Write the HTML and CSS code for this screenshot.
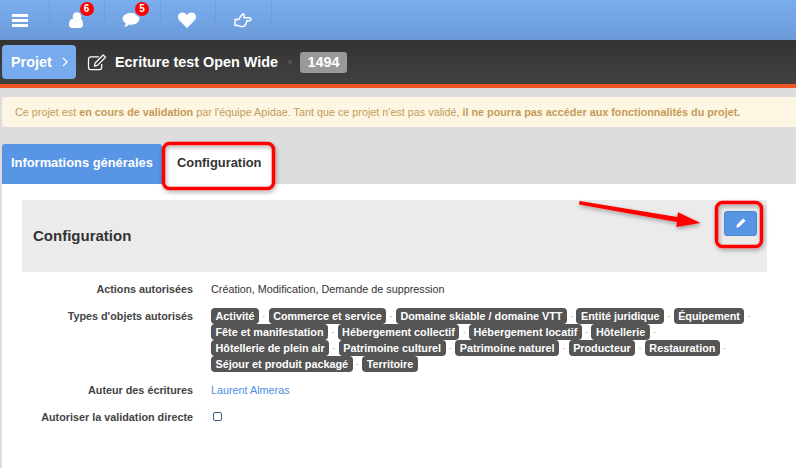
FILE: index.html
```html
<!DOCTYPE html>
<html lang="fr">
<head>
<meta charset="utf-8">
<title>Configuration</title>
<link rel="stylesheet" href="styles.css">
</head>
<body>
<nav class="topbar">
  <div class="cell first">
    <svg class="ico" width="16" height="13" viewBox="0 0 16 13"><path fill="#fff" d="M0 0h16v3H0zM0 5h16v3H0zM0 10h16v3H0z"/></svg>
  </div>
  <div class="cell">
    <svg class="ico" width="14" height="16" viewBox="0 0 14 16"><circle cx="8" cy="4.500" r="4.300" fill="#fff"/><path fill="#fff" d="M0 12.500C0 9 1.500 7 3.500 6.500 5 8 6 8.500 7.500 8.500s3-.5 4-2c1.500.5 2.500 2.500 2.500 6 0 2-1 3.500-3 3.500H3c-2 0-3-1.500-3-3.500z"/></svg>
    <span class="count">6</span>
  </div>
  <div class="cell">
    <svg class="ico" width="18" height="16" viewBox="0 0 18 17"><path fill="#fff" d="M9 1c5 0 9 2.700 9 6.300S14 13.500 9 13.500c-.8 0-1.500 0-2.200-.2C5.500 14.800 3.500 16 1.500 16c1-1 1.800-2.200 2-3.800C1.400 11.100 0 9.300 0 7.300 0 3.700 4 1 9 1z"/></svg>
    <span class="count">5</span>
  </div>
  <div class="cell">
    <svg class="ico" width="18" height="16" viewBox="0 0 18 16"><path fill="#fff" d="M9 16 1.500 8.500C-.5 6.500-.5 3.500 1.200 1.700 3 0 6 0 7.800 1.700L9 3l1.200-1.300C12 0 15 0 16.800 1.700c1.700 1.800 1.700 4.800-.3 6.800z"/></svg>
  </div>
  <div class="cell">
    <svg class="ico" width="18" height="15" viewBox="0 0 18 15"><path fill="none" stroke="#fff" stroke-width="1.500" stroke-linejoin="round" d="M1 6.500h3.500L8.500 1c1.200 0 2 .8 1.800 2L9.800 4.800h5.400c1 0 1.800.7 1.800 1.500s-.8 1.500-1.800 1.500h-2.500c.5.900 0 1.800-.7 2 .3.900-.2 1.700-1 1.900.1 1-.6 1.800-1.700 1.800H6.500c-1 0-1.500-.6-2-1H1z"/></svg>
  </div>
</nav>

<header class="projectbar">
  <a class="crumb">Projet <svg class="chev" width="6" height="10" viewBox="0 0 6 10"><path fill="none" stroke="#fff" stroke-width="1.300" d="M1 1l4 4-4 4"/></svg></a>
  <svg class="edit" width="20" height="17" viewBox="0 0 20 18"><path fill="none" stroke="#fff" stroke-width="1.300" d="M15 10.500V14a2.500 2.500 0 0 1-2.500 2.500h-9A2.500 2.500 0 0 1 1 14V5.500A2.500 2.500 0 0 1 3.500 3H12"/><path fill="none" stroke="#fff" stroke-width="1.300" stroke-linejoin="round" d="M16.500 1l2.500 2.500-8.500 8.500-3.300.8.800-3.300z"/></svg>
  <h1 class="title">Ecriture test Open Wide</h1>
  <span class="sep"></span>
  <span class="idbadge">1494</span>
</header>
<div class="stripe"></div>

<main class="page">
  <p class="alert">Ce projet est <b>en cours de validation</b> par l'équipe Apidae. Tant que ce projet n'est pas validé, <b>il ne pourra pas accéder aux fonctionnalités du projet.</b></p>

  <div class="tabs">
    <a class="tab active">Informations générales</a>
    <a class="tab">Configuration</a>
  </div>

  <section class="content">
    <div class="panelhead">
      <h2>Configuration</h2>
      <button class="editbtn" type="button"><svg width="10" height="10" viewBox="0 0 10 10"><path fill="#fff" d="M7.200.5l2.300 2.300-6.300 6.300L.3 9.700l.6-2.900z"/></svg></button>
    </div>
    <div class="row">
      <div class="label">Actions autorisées</div>
      <div class="value">Création, Modification, Demande de suppression</div>
    </div>
    <div class="row">
      <div class="label">Types d'objets autorisés</div>
      <div class="value tags">
        <span class="tag">Activité</span> <i>·</i> <span class="tag">Commerce et service</span> <i>·</i> <span class="tag">Domaine skiable / domaine VTT</span> <i>·</i> <span class="tag">Entité juridique</span> <i>·</i> <span class="tag">Équipement</span> <i>·</i>
        <span class="tag">Fête et manifestation</span> <i>·</i> <span class="tag">Hébergement collectif</span> <i>·</i> <span class="tag">Hébergement locatif</span> <i>·</i> <span class="tag">Hôtellerie</span> <i>·</i>
        <span class="tag">Hôtellerie de plein air</span> <i>·</i> <span class="tag">Patrimoine culturel</span> <i>·</i> <span class="tag">Patrimoine naturel</span> <i>·</i> <span class="tag">Producteur</span> <i>·</i> <span class="tag">Restauration</span> <i>·</i>
        <span class="tag">Séjour et produit packagé</span> <i>·</i> <span class="tag">Territoire</span>
      </div>
    </div>
    <div class="row">
      <div class="label">Auteur des écritures</div>
      <div class="value"><a class="link">Laurent Almeras</a></div>
    </div>
    <div class="row">
      <div class="label">Autoriser la validation directe</div>
      <div class="value"><span class="check"></span></div>
    </div>
  </section>
</main>

<svg class="annot" width="796" height="468" viewBox="0 0 796 468">
  <defs>
    <filter id="sh" x="-20%" y="-20%" width="140%" height="140%"><feDropShadow dx="1" dy="2" stdDeviation="2" flood-color="#000" flood-opacity=".35"/></filter>
  </defs>
  <g filter="url(#sh)">
    <rect x="163.500" y="143.500" width="110" height="45" rx="6" fill="none" stroke="#f00" stroke-width="3.500"/>
    <rect x="716.500" y="202.500" width="45" height="44" rx="6" fill="none" stroke="#f00" stroke-width="3.500"/>
    <path fill="#f00" d="M579.500 201l-.5 3.500 98 17.500-.8 5 24.300-4-22.500-10.800-.7 4.800z"/>
  </g>
</svg>
</body>
</html>
```
FILE: styles.css
```css
* { box-sizing: border-box; }
html, body { margin: 0; padding: 0; }
body {
  width: 796px;
  height: 468px;
  overflow: hidden;
  position: relative;
  background: #ddd;
  font-family: "Liberation Sans", Arial, sans-serif;
  font-size: 10.8px;
  color: #333;
}
.topbar {
  display: flex;
  height: 40px;
  background: linear-gradient(#7baeee, #6a9ad8);
}
.cell {
  position: relative;
  width: 55.6px;
  height: 40px;
  padding-right: 2px;
  display: flex;
  align-items: center;
  justify-content: center;
  border-right: 1px solid #6f9fe0;
}
.cell.first { width: 49.5px; padding-right: 8px; }
.ico { display: block; }
.count {
  position: absolute;
  top: 2px;
  left: 30px;
  width: 14px;
  height: 14px;
  border-radius: 50%;
  background: #f00;
  box-shadow: 0 0 0 1.5px #78aae9;
  color: #fff;
  font-size: 10px;
  font-weight: bold;
  line-height: 14px;
  text-align: center;
}
.projectbar {
  display: flex;
  align-items: center;
  height: 44px;
  padding-left: 2px;
  background: linear-gradient(#333, #414141);
  color: #fff;
}
.crumb {
  display: flex;
  align-items: center;
  width: 74px;
  height: 34px;
  padding-left: 9px;
  border-radius: 4px;
  background: #78aaee;
  font-size: 14.4px;
  font-weight: bold;
}
.chev { margin-left: 10px; }
.edit { margin-left: 11px; }
.title {
  margin: 0 0 0 8px;
  font-size: 14.4px;
  font-weight: bold;
}
.sep {
  width: 4px;
  height: 4px;
  margin-left: 10px;
  border-radius: 50%;
  background: #555;
}
.idbadge {
  margin-left: 8px;
  width: 47px;
  height: 21px;
  border-radius: 3px;
  background: #999;
  font-size: 14.4px;
  font-weight: bold;
  line-height: 21px;
  text-align: center;
}
.stripe { height: 4px; background: #ee5626; }
.page { padding: 9px 0 0 2px; }
.alert {
  margin: 0 0 17px 0;
  height: 30px;
  padding-left: 13px;
  background: #fdf6e3;
  border-radius: 3px 0 0 3px;
  color: #c59a57;
  line-height: 30px;
}
.alert b { font-weight: bold; }
.tabs { display: flex; height: 40px; }
.tab {
  display: block;
  height: 40px;
  line-height: 38px;
  font-size: 12.9px;
  font-weight: bold;
  white-space: nowrap;
  border-radius: 3px 3px 0 0;
}
.tab.active {
  width: 160px;
  padding-left: 9px;
  background: #5895e4;
  color: #fff;
}
.tab:not(.active) {
  width: 111px;
  padding-left: 15px;
  background: #fff;
  color: #333;
}
.content {
  height: 300px;
  padding: 16px 29px 0 20px;
  background: #fff;
}
.panelhead {
  display: flex;
  align-items: center;
  justify-content: space-between;
  height: 72px;
  padding: 0 10px 2px 11px;
  margin-bottom: 9px;
  background: #ebebeb;
}
.panelhead h2 {
  margin: 0;
  font-size: 15px;
  font-weight: bold;
  color: #333;
}
.editbtn {
  width: 33px;
  height: 25px;
  transform: translateY(-12px);
  padding: 0;
  display: flex;
  align-items: center;
  justify-content: center;
  background: #5895e4;
  border: 1px solid #4a83cf;
  border-radius: 3px;
}
.row {
  display: grid;
  grid-template-columns: 171px 1fr;
  column-gap: 18px;
  margin-bottom: 11px;
  line-height: 16px;
}
.label { text-align: right; font-weight: bold; color: #444; }
.value { min-width: 0; }
.tags { margin-bottom: -1px; }
.tags i { font-style: normal; color: #c59a57; }
.tag {
  display: inline-block;
  padding: 0 4.5px;
  height: 16px;
  border-radius: 4px;
  background: #555;
  color: #fff;
  font-weight: bold;
  line-height: 16px;
}
.link { color: #4d8ee6; }
.check {
  display: inline-block;
  width: 9px;
  height: 9px;
  margin: 3px 0 0 2px;
  border: 1px solid #3a5a80;
  border-radius: 2px;
}
.annot {
  position: absolute;
  left: 0;
  top: 0;
  pointer-events: none;
}
```
